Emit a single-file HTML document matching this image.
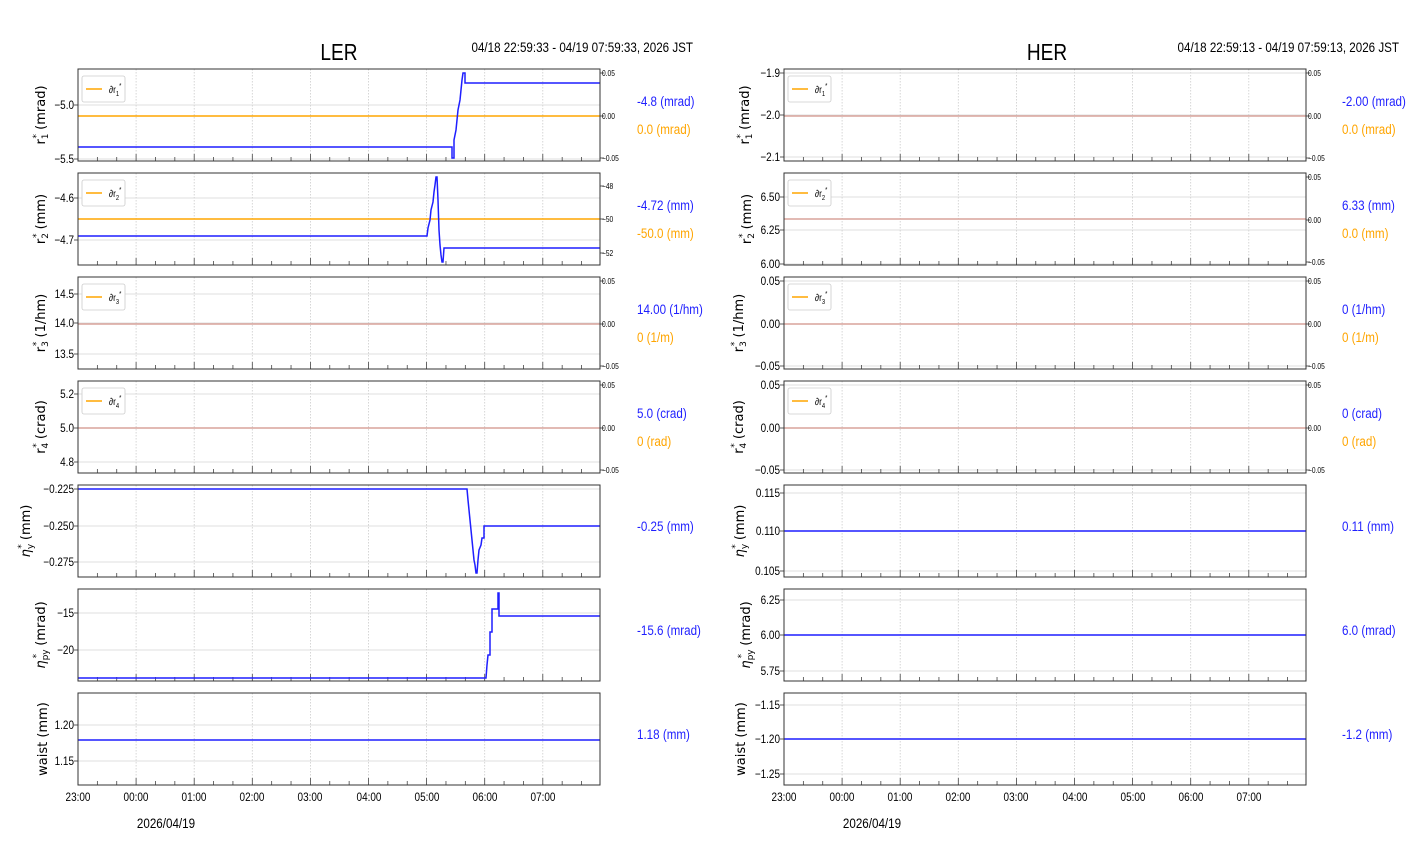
<!DOCTYPE html>
<html><head><meta charset="utf-8"><style>
html,body{margin:0;padding:0;background:#fff;width:1412px;height:864px;overflow:hidden}
svg{display:block}
.n{font-family:"Liberation Sans",sans-serif}
.n text{transform-box:fill-box;transform:scaleX(.83);transform-origin:left center}
.n text.e,.tl text{transform-origin:right center}
.n text.m,.xl text{transform-origin:center center}
.yl{font-family:"DejaVu Sans","Liberation Sans",sans-serif;font-size:13px}
.tl{font-size:12px;text-anchor:end}
.rl{font-size:8px}
.xl{font-size:12px;text-anchor:middle}
.vb{font-size:14px;fill:#1f1fff}
.vo{font-size:14px;fill:#ffa500}
</style></head><body>
<svg id="s" width="1412" height="864" xmlns="http://www.w3.org/2000/svg">
<g id="g"></g>
<g class="n">
<text class="m" x="339" y="60" font-size="23" text-anchor="middle">LER</text>
<text class="m" x="1047" y="60" font-size="23" text-anchor="middle">HER</text>
<text class="e" x="693" y="52" font-size="14" text-anchor="end">04/18 22:59:33 - 04/19 07:59:33, 2026 JST</text>
<text class="e" x="1399" y="52" font-size="14" text-anchor="end">04/18 22:59:13 - 04/19 07:59:13, 2026 JST</text>

<g class="tl">
<text x="74" y="109">−5.0</text><text x="74" y="163">−5.5</text>
<text x="74" y="202">−4.6</text><text x="74" y="244">−4.7</text>
<text x="74" y="298">14.5</text><text x="74" y="327">14.0</text><text x="74" y="358">13.5</text>
<text x="74" y="398">5.2</text><text x="74" y="432">5.0</text><text x="74" y="466">4.8</text>
<text x="74" y="493">−0.225</text><text x="74" y="530">−0.250</text><text x="74" y="566">−0.275</text>
<text x="74" y="617">−15</text><text x="74" y="654">−20</text>
<text x="74" y="729">1.20</text><text x="74" y="765">1.15</text>
<text x="780" y="77">−1.9</text><text x="780" y="119">−2.0</text><text x="780" y="161">−2.1</text>
<text x="780" y="201">6.50</text><text x="780" y="234">6.25</text><text x="780" y="268">6.00</text>
<text x="780" y="285">0.05</text><text x="780" y="328">0.00</text><text x="780" y="370">−0.05</text>
<text x="780" y="389">0.05</text><text x="780" y="432">0.00</text><text x="780" y="474">−0.05</text>
<text x="780" y="497">0.115</text><text x="780" y="535">0.110</text><text x="780" y="575">0.105</text>
<text x="780" y="604">6.25</text><text x="780" y="639">6.00</text><text x="780" y="675">5.75</text>
<text x="780" y="709">−1.15</text><text x="780" y="743">−1.20</text><text x="780" y="778">−1.25</text>
</g>
<g class="rl">
<text x="602" y="76">0.05</text><text x="602" y="119">0.00</text><text x="602" y="161">−0.05</text>
<text x="602" y="189">−48</text><text x="602" y="222">−50</text><text x="602" y="256">−52</text>
<text x="602" y="284">0.05</text><text x="602" y="327">0.00</text><text x="602" y="369">−0.05</text>
<text x="602" y="388">0.05</text><text x="602" y="431">0.00</text><text x="602" y="473">−0.05</text>
<text x="1308" y="76">0.05</text><text x="1308" y="119">0.00</text><text x="1308" y="161">−0.05</text>
<text x="1308" y="180">0.05</text><text x="1308" y="223">0.00</text><text x="1308" y="265">−0.05</text>
<text x="1308" y="284">0.05</text><text x="1308" y="327">0.00</text><text x="1308" y="369">−0.05</text>
<text x="1308" y="388">0.05</text><text x="1308" y="431">0.00</text><text x="1308" y="473">−0.05</text>
</g>
<g class="xl">
<text x="78" y="801">23:00</text><text x="136" y="801">00:00</text><text x="194" y="801">01:00</text><text x="252" y="801">02:00</text><text x="310" y="801">03:00</text><text x="369" y="801">04:00</text><text x="427" y="801">05:00</text><text x="485" y="801">06:00</text><text x="543" y="801">07:00</text>
<text x="784" y="801">23:00</text><text x="842" y="801">00:00</text><text x="900" y="801">01:00</text><text x="958" y="801">02:00</text><text x="1016" y="801">03:00</text><text x="1075" y="801">04:00</text><text x="1133" y="801">05:00</text><text x="1191" y="801">06:00</text><text x="1249" y="801">07:00</text>
<text x="166" y="828" font-size="14">2026/04/19</text>
<text x="872" y="828" font-size="14">2026/04/19</text>
</g>
<text class="vb" x="637" y="106">-4.8 (mrad)</text><text class="vo" x="637" y="134">0.0 (mrad)</text>
<text class="vb" x="637" y="210">-4.72 (mm)</text><text class="vo" x="637" y="238">-50.0 (mm)</text>
<text class="vb" x="637" y="314">14.00 (1/hm)</text><text class="vo" x="637" y="342">0 (1/m)</text>
<text class="vb" x="637" y="418">5.0 (crad)</text><text class="vo" x="637" y="446">0 (rad)</text>
<text class="vb" x="637" y="531">-0.25 (mm)</text>
<text class="vb" x="637" y="635">-15.6 (mrad)</text>
<text class="vb" x="637" y="739">1.18 (mm)</text>
<text class="vb" x="1342" y="106">-2.00 (mrad)</text><text class="vo" x="1342" y="134">0.0 (mrad)</text>
<text class="vb" x="1342" y="210">6.33 (mm)</text><text class="vo" x="1342" y="238">0.0 (mm)</text>
<text class="vb" x="1342" y="314">0 (1/hm)</text><text class="vo" x="1342" y="342">0 (1/m)</text>
<text class="vb" x="1342" y="418">0 (crad)</text><text class="vo" x="1342" y="446">0 (rad)</text>
<text class="vb" x="1342" y="531">0.11 (mm)</text>
<text class="vb" x="1342" y="635">6.0 (mrad)</text>
<text class="vb" x="1342" y="739">-1.2 (mm)</text>
<g font-size="10">
<text x="109" y="93">∂r<tspan font-size="7" dy="3">1</tspan><tspan font-size="7" dy="-8">*</tspan></text>
<text x="109" y="197">∂r<tspan font-size="7" dy="3">2</tspan><tspan font-size="7" dy="-8">*</tspan></text>
<text x="109" y="301">∂r<tspan font-size="7" dy="3">3</tspan><tspan font-size="7" dy="-8">*</tspan></text>
<text x="109" y="405">∂r<tspan font-size="7" dy="3">4</tspan><tspan font-size="7" dy="-8">*</tspan></text>
<text x="815" y="93">∂r<tspan font-size="7" dy="3">1</tspan><tspan font-size="7" dy="-8">*</tspan></text>
<text x="815" y="197">∂r<tspan font-size="7" dy="3">2</tspan><tspan font-size="7" dy="-8">*</tspan></text>
<text x="815" y="301">∂r<tspan font-size="7" dy="3">3</tspan><tspan font-size="7" dy="-8">*</tspan></text>
<text x="815" y="405">∂r<tspan font-size="7" dy="3">4</tspan><tspan font-size="7" dy="-8">*</tspan></text>
</g>
</g>
<g class="yl">
<text transform="translate(45,115) rotate(-90)" text-anchor="middle">r<tspan font-size="9" dy="3">1</tspan><tspan font-size="9" dy="-9" dx="-5">*</tspan><tspan dy="6"> (mrad)</tspan></text>
<text transform="translate(45,219) rotate(-90)" text-anchor="middle">r<tspan font-size="9" dy="3">2</tspan><tspan font-size="9" dy="-9" dx="-5">*</tspan><tspan dy="6"> (mm)</tspan></text>
<text transform="translate(45,323) rotate(-90)" text-anchor="middle">r<tspan font-size="9" dy="3">3</tspan><tspan font-size="9" dy="-9" dx="-5">*</tspan><tspan dy="6"> (1/hm)</tspan></text>
<text transform="translate(45,427) rotate(-90)" text-anchor="middle">r<tspan font-size="9" dy="3">4</tspan><tspan font-size="9" dy="-9" dx="-5">*</tspan><tspan dy="6"> (crad)</tspan></text>
<text transform="translate(30,531) rotate(-90)" text-anchor="middle"><tspan font-style="italic">η</tspan><tspan font-size="9" dy="3">y</tspan><tspan font-size="9" dy="-9" dx="-5">*</tspan><tspan dy="6"> (mm)</tspan></text>
<text transform="translate(45,635) rotate(-90)" text-anchor="middle"><tspan font-style="italic">η</tspan><tspan font-size="9" dy="3">py</tspan><tspan font-size="9" dy="-9" dx="-9">*</tspan><tspan dy="6" dx="4"> (mrad)</tspan></text>
<text transform="translate(47,739) rotate(-90)" text-anchor="middle">waist (mm)</text>
<text transform="translate(749,115) rotate(-90)" text-anchor="middle">r<tspan font-size="9" dy="3">1</tspan><tspan font-size="9" dy="-9" dx="-5">*</tspan><tspan dy="6"> (mrad)</tspan></text>
<text transform="translate(751,219) rotate(-90)" text-anchor="middle">r<tspan font-size="9" dy="3">2</tspan><tspan font-size="9" dy="-9" dx="-5">*</tspan><tspan dy="6"> (mm)</tspan></text>
<text transform="translate(743,323) rotate(-90)" text-anchor="middle">r<tspan font-size="9" dy="3">3</tspan><tspan font-size="9" dy="-9" dx="-5">*</tspan><tspan dy="6"> (1/hm)</tspan></text>
<text transform="translate(743,427) rotate(-90)" text-anchor="middle">r<tspan font-size="9" dy="3">4</tspan><tspan font-size="9" dy="-9" dx="-5">*</tspan><tspan dy="6"> (crad)</tspan></text>
<text transform="translate(744,531) rotate(-90)" text-anchor="middle"><tspan font-style="italic">η</tspan><tspan font-size="9" dy="3">y</tspan><tspan font-size="9" dy="-9" dx="-5">*</tspan><tspan dy="6"> (mm)</tspan></text>
<text transform="translate(750,635) rotate(-90)" text-anchor="middle"><tspan font-style="italic">η</tspan><tspan font-size="9" dy="3">py</tspan><tspan font-size="9" dy="-9" dx="-9">*</tspan><tspan dy="6" dx="4"> (mrad)</tspan></text>
<text transform="translate(745,739) rotate(-90)" text-anchor="middle">waist (mm)</text>
</g>
</svg>
<script>
(function(){
var g=document.getElementById('g'),h='';
function L(x1,y1,x2,y2,st){h+='<line x1="'+x1+'" y1="'+y1+'" x2="'+x2+'" y2="'+y2+'" '+st+'/>';}
var yt={0:[[105,159],[116,73,158]],1:[[198,240],[219,186,253]],2:[[294,323,354],[324,281,366]],3:[[394,428,462],[428,385,470]],4:[[489,526,562]],5:[[613,650]],6:[[725,761]]};
var ytR={0:[[73,115,157],[116,73,158]],1:[[197,230,264],[220,177,262]],2:[[281,324,366],[324,281,366]],3:[[385,428,470],[428,385,470]],4:[[493,531,571]],5:[[600,635,671]],6:[[705,739,774]]};
var hs=58.1;
[[78,yt],[784,ytR]].forEach(function(side){
 var x0=side[0],T=side[1];
 for(var i=0;i<7;i++){
  var y0=69+104*i,y1=y0+92;
  for(var k=1;k<9;k++){var x=x0+hs*k;L(x,y0,x,y1,'stroke="#ccc" stroke-width="0.8" stroke-dasharray="1.5,1.5"');}
  T[i][0].forEach(function(y){L(x0,y,x0+522,y,'stroke="#d4d4d4" stroke-width="0.8"');L(x0-4,y,x0,y,'stroke="#333" stroke-width="0.8"');});
  if(T[i][1]){T[i][1].slice(1).concat(T[i][1][0]).forEach(function(y){L(x0+522,y,x0+526,y,'stroke="#333" stroke-width="0.8"');});}
  for(var m=0;m<27;m++){var x=x0+hs*m/3;var len=(m%3==0)?7:4;L(x,y1-len,x,y1,'stroke="#444" stroke-width="0.8"');}
  if(i<4){
   h+='<rect x="'+(x0+4)+'" y="'+(y0+7)+'" width="43" height="26" rx="2" fill="#fff" stroke="#ccc" stroke-width="0.8"/>';
   L(x0+8,y0+20,x0+24,y0+20,'stroke="#ffa500" stroke-width="1.5"');
  }
 }
});
function P(pts,c,w){h+='<polyline points="'+pts+'" fill="none" stroke="'+c+'" stroke-width="'+(w||1.5)+'"/>';}
var S='#d9a49c';
P('78,116 600,116','#ffa500');
P('78,147 452,147 452,158 454,158 454,140 456,130 457,120 458,110 460,100 461,90 462,80 463,73 465,73 465,83 600,83','#1f1fff');
P('78,219 600,219','#ffa500');
P('78,236 427,236 428,228 430,220 431,210 433,202 434,192 435,185 436,177 437,177 438,200 439,230 440,245 441,255 442,262 443,262 444,248 600,248','#1f1fff');
P('78,324 600,324',S);P('78,428 600,428',S);
P('78,489 467,489 468,500 469,510 470,520 471,530 472,540 473,550 474,560 475,565 476,573 477,573 478,560 479,550 481,545 482,538 484,538 484,526 600,526','#1f1fff');
P('78,678 486,678 487,665 488,655 490,655 490,632 492,632 492,609 498,609 498,593 499,593 499,616 600,616','#1f1fff');
P('78,740 600,740','#1f1fff');
P('784,116 1306,116',S);P('784,219 1306,219',S);P('784,324 1306,324',S);P('784,428 1306,428',S);
P('784,531 1306,531','#1f1fff');P('784,635 1306,635','#1f1fff');P('784,739 1306,739','#1f1fff');
[78,784].forEach(function(x0){for(var i=0;i<7;i++)h+='<rect x="'+x0+'" y="'+(69+104*i)+'" width="522" height="92" fill="none" stroke="#333" stroke-width="1"/>';});
g.innerHTML=h;
})();
</script>
</body></html>
